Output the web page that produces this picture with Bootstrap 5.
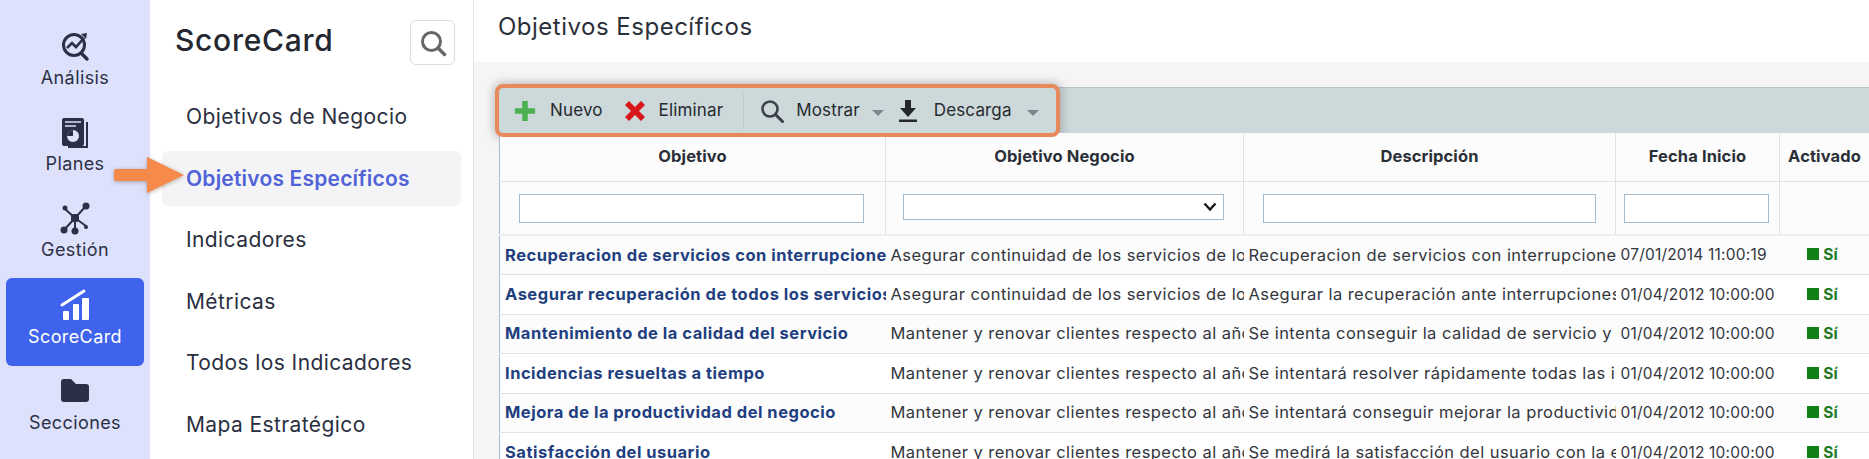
<!DOCTYPE html>
<html lang="es">
<head>
  <meta charset="UTF-8">
  <title>ScoreCard</title>
  <link href="https://cdn.jsdelivr.net/npm/bootstrap@5.3.3/dist/css/bootstrap.min.css" rel="stylesheet">
  <style>
    html, body { height: 459px; overflow: hidden; }
    body { font-family: Inter, "Open Sans", sans-serif; color: #2b2f3f; background: #fff; }
    .app-shell { height: 459px; }

    .rail { width: 150px; background: #dde1fb; padding-top: 21px; }
    .rail-item { width: 138px; height: 86px; margin: 0 6px; border-radius: 6px; color: #2b3046; font-size: 18px; letter-spacing: .4px; line-height: 24px; text-decoration: none; }
    .rail-item svg { width: 36px; height: 36px; margin-top: 7px; margin-bottom: 2px; }
    .rail-item.is-active { background: #3f63ec; color: #fff; height: 88px; margin-top: -1px; }
    .rail-item.is-active svg { margin-top: 9px; }

    .submenu { width: 324px; border-right: 1px solid #e4e4e4; padding: 0 12px; }
    .submenu-head { height: 81px; padding: 20px 6px 0 13px; }
    .submenu-title { font-size: 30px; font-weight: 500; letter-spacing: .7px; color: #24272f; margin: 0; line-height: 40px; }
    .search-box { width: 45px; height: 45px; border: 1px solid #dcdcdc; border-radius: 6px; background: #fff; padding: 0; }
    .side-links { margin: 8px 0 0; padding: 0; list-style: none; }
    .side-link { display: block; height: 55px; margin: 0 0 6.5px; padding: 0 24px; line-height: 55px; font-size: 21px; letter-spacing: .4px; color: #2b2f3f; border-radius: 6px; text-decoration: none; }
    .side-link.is-current { background: #f4f4f6; color: #4f63d7; font-weight: 600; letter-spacing: .2px; }

    .main-pane { background: #f5f5f5; min-width: 0; }
    .page-head { height: 62px; background: #fff; padding: 12px 24px 0; }
    .page-title { font-size: 24px; letter-spacing: .5px; line-height: 30px; font-weight: 400; color: #2b2f3a; margin: 0; }
    .grid-wrap { padding: 25px 0 0 25px; }
    .tool-strip { height: 46px; background: #ccd8da; border-top: 1px solid #b9c6c9; }
    .tool-set { width: 557px; height: 45px; outline: 4px solid #e8895c; border-radius: 4px; box-shadow: 0 0 8px 6px rgba(70, 70, 70, .3); padding-left: 15px; }
    .tool-btn { font-size: 17px; letter-spacing: .15px; color: #26292e; }
    .tool-sep { width: 1px; height: 36px; background: #c0ccd0; }
    .tool-caret { width: 0; height: 0; border-left: 6px solid transparent; border-right: 6px solid transparent; border-top: 6px solid #7b858b; margin-top: 4px; }
    .tool-nuevo { margin-left: 14px; }
    .tool-del { margin-left: 21px; }
    .tool-del-label { margin-left: 13px; }
    .tool-sep { margin-left: 20px; }
    .tool-find { margin-left: 16px; }
    .tool-find-label { margin-left: 12px; }
    .tool-find-caret { margin-left: 12px; }
    .tool-down { margin-left: 14px; }
    .tool-down-label { margin-left: 16px; }
    .tool-down-caret { margin-left: 15px; }

    .data-grid { table-layout: fixed; width: 1370px; margin: 0; border-collapse: collapse; background: #fff; border-left: 1px solid #a9bdd0; font-size: 16.5px; letter-spacing: .45px; }
    .data-grid th, .data-grid td { border-bottom: 1px solid #dde3e8; white-space: nowrap; overflow: hidden; vertical-align: middle; }
    .data-grid thead th { height: 48px; background: #fcfcfc; text-align: center; font-weight: 700; color: #2b3038; border-right: 1px solid #dfe3e6; padding: 0; font-size: 16.5px; letter-spacing: .1px; }
    .data-grid .filter-row td { height: 54px; background: #fcfcfc; border-right: 1px solid #dfe3e6; border-bottom: 2px solid #eee; vertical-align: top; padding: 12px 19px 0; }
    .data-grid .filter-row .filter-first { padding-right: 21px; }
    .data-grid .filter-row .filter-choice { padding-left: 17px; padding-right: 19px; }
    .data-grid .filter-row .filter-date { padding-left: 8px; padding-right: 10px; }
    .data-grid tbody td { height: 39.5px; padding: 0 2px 0 5px; color: #33363d; }
    .data-grid tbody tr:nth-child(even) td { background: #fcfcfc; }
    .data-grid tbody .cell-date { font-size: 15.5px; letter-spacing: .2px; padding-right: 0; }
    .data-grid tbody .cell-state { padding: 0 4px 0 0; font-size: 15.5px; letter-spacing: 0; }
    .grid-link { font-weight: 700; color: #1f3f80; letter-spacing: .5px; text-decoration: none; }
    .grid-input { display: block; width: 100%; height: 29px; border: 1px solid #a4bccd; background: #fff; padding: 0; border-radius: 0; }
    .grid-select { display: block; width: 100%; height: 26px; border: 1px solid #a4bccd; padding: 0; border-radius: 0; appearance: none; background: #fff url("data:image/svg+xml,%3csvg xmlns='http://www.w3.org/2000/svg' viewBox='0 0 14 10'%3e%3cpath d='M1.5 1.5L7 7.5l5.5-6' fill='none' stroke='%23111' stroke-width='2.2'/%3e%3c/svg%3e") no-repeat right 6px center / 14px 10px; }
    .status-dot { display: inline-block; width: 12px; height: 12px; background: #118018; margin-right: 4px; }
    .status-yes { font-weight: 700; color: #1f7a26; }

    .note-arrow { position: absolute; left: 112px; top: 153px; width: 76px; height: 44px; filter: drop-shadow(0 1px 2px rgba(90, 60, 40, .4)); }
  </style>
</head>
<body>
  <div class="app-shell d-flex position-relative">
    <nav class="rail flex-shrink-0">
      <a class="rail-item d-flex flex-column align-items-center" href="#">
        <svg viewBox="0 0 36 36"><circle cx="17" cy="17" r="10.5" fill="none" stroke="#2b3046" stroke-width="3"/><path d="M10 20l5-5 4 4 8-9" fill="none" stroke="#2b3046" stroke-width="2.6"/><path d="M24 6l6-1-1 6z" fill="#2b3046"/><path d="M24 25l6 6" stroke="#2b3046" stroke-width="3.4" stroke-linecap="round"/></svg>
        <span>Análisis</span>
      </a>
      <a class="rail-item d-flex flex-column align-items-center" href="#">
        <svg viewBox="0 0 36 36"><path d="M29 8h2v26H11v-2h18z" fill="#2b3046"/><rect x="5" y="4" width="22" height="28" rx="2" fill="#2b3046"/><path d="M8 8h16M8 12h11" stroke="#dde1fb" stroke-width="1.5"/><circle cx="16" cy="22" r="6" fill="#dde1fb"/><path d="M16 22v-6a6 6 0 0 0-6 6z" fill="#2b3046"/></svg>
        <span>Planes</span>
      </a>
      <a class="rail-item d-flex flex-column align-items-center" href="#">
        <svg viewBox="0 0 36 36"><path d="M18 18L7 8M18 18L29 6M18 18L7 30M18 18v12M18 18l11 8" stroke="#2b3046" stroke-width="2"/><rect x="14" y="14" width="8" height="8" rx="3" fill="#2b3046"/><circle cx="8" cy="8" r="2.5" fill="#2b3046"/><circle cx="29" cy="6" r="3.5" fill="#2b3046"/><circle cx="7" cy="30" r="3.5" fill="#2b3046"/><circle cx="18" cy="31" r="3.5" fill="#2b3046"/><circle cx="29" cy="27" r="2" fill="#2b3046"/></svg>
        <span>Gestión</span>
      </a>
      <a class="rail-item is-active d-flex flex-column align-items-center" href="#">
        <svg viewBox="0 0 36 36"><path d="M5 18L27 4" stroke="#fff" stroke-width="3" stroke-linecap="round"/><rect x="6" y="24" width="6" height="9" rx="1" fill="#fff"/><rect x="16" y="17" width="6" height="16" rx="1" fill="#fff"/><rect x="25" y="11" width="7" height="22" rx="1" fill="#fff"/></svg>
        <span>ScoreCard</span>
      </a>
      <a class="rail-item d-flex flex-column align-items-center" href="#">
        <svg viewBox="0 0 36 36"><path d="M4 9a3 3 0 0 1 3-3h7l5 5h10a3 3 0 0 1 3 3v12a3 3 0 0 1-3 3H7a3 3 0 0 1-3-3z" fill="#2b3046"/></svg>
        <span>Secciones</span>
      </a>
    </nav>

    <aside class="submenu flex-shrink-0">
      <div class="submenu-head d-flex justify-content-between align-items-start">
        <h1 class="submenu-title">ScoreCard</h1>
        <button class="search-box d-flex align-items-center justify-content-center" type="button">
          <svg width="28" height="28" viewBox="0 0 28 28"><circle cx="12.5" cy="12.5" r="9" fill="none" stroke="#666" stroke-width="3"/><path d="M19 19l6.5 6.5" stroke="#666" stroke-width="3.4" stroke-linecap="round"/></svg>
        </button>
      </div>
      <ul class="side-links">
        <li><a class="side-link" href="#">Objetivos de Negocio</a></li>
        <li><a class="side-link is-current" href="#">Objetivos Específicos</a></li>
        <li><a class="side-link" href="#">Indicadores</a></li>
        <li><a class="side-link" href="#">Métricas</a></li>
        <li><a class="side-link" href="#">Todos los Indicadores</a></li>
        <li><a class="side-link" href="#">Mapa Estratégico</a></li>
      </ul>
    </aside>

    <main class="main-pane flex-grow-1">
      <div class="page-head">
        <h2 class="page-title">Objetivos Específicos</h2>
      </div>
      <div class="grid-wrap">
        <div class="tool-strip">
          <div class="tool-set d-flex align-items-center">
            <svg width="22" height="22" viewBox="0 0 24 24"><path d="M9 1h6v8h8v6h-8v8H9v-8H1V9h8z" fill="#4caf50"/></svg>
            <span class="tool-btn tool-nuevo">Nuevo</span>
            <svg class="tool-del" width="22" height="22" viewBox="0 0 22 22"><path d="M1 5l4-4 6 6 6-6 4 4-6 6 6 6-4 4-6-6-6 6-4-4 6-6z" fill="#d81818"/></svg>
            <span class="tool-btn tool-del-label">Eliminar</span>
            <span class="tool-sep"></span>
            <svg class="tool-find" width="24" height="24" viewBox="0 0 24 24"><circle cx="10" cy="10" r="7.5" fill="none" stroke="#3b4149" stroke-width="2.6"/><path d="M15.5 15.5l7 7" stroke="#3b4149" stroke-width="3" stroke-linecap="round"/></svg>
            <span class="tool-btn tool-find-label">Mostrar</span>
            <span class="tool-caret tool-find-caret"></span>
            <svg class="tool-down" width="20" height="24" viewBox="0 0 20 24"><path d="M7 1h6v8h5l-8 9-8-9h5zM1 20.5h18V23H1z" fill="#23272c"/></svg>
            <span class="tool-btn tool-down-label">Descarga</span>
            <span class="tool-caret tool-down-caret"></span>
          </div>
        </div>
        <table class="data-grid">
          <colgroup>
            <col style="width: 386px"><col style="width: 358px"><col style="width: 372px"><col style="width: 164px"><col style="width: 90px">
          </colgroup>
          <thead>
            <tr><th>Objetivo</th><th>Objetivo Negocio</th><th>Descripción</th><th>Fecha Inicio</th><th>Activado</th></tr>
          </thead>
          <tbody id="gridBody">
            <tr class="filter-row">
              <td class="filter-first"><input class="grid-input" type="text" aria-label="Objetivo"></td>
              <td class="filter-choice"><select class="grid-select" aria-label="Objetivo Negocio"><option></option></select></td>
              <td><input class="grid-input" type="text" aria-label="Descripción"></td>
              <td class="filter-date"><input class="grid-input" type="text" aria-label="Fecha Inicio"></td>
              <td></td>
            </tr>
          </tbody>
        </table>
      </div>
    </main>

    <svg class="note-arrow" viewBox="0 0 76 44">
      <path d="M4 16h31V4l37 18-37 18V28H4a2 2 0 0 1-2-2v-8a2 2 0 0 1 2-2z" fill="#f58a4b"/>
    </svg>
  </div>

  <script>
    const cont = 'Asegurar continuidad de los servicios de los clientes';
    const renov = 'Mantener y renovar clientes respecto al año anterior';
    const rows = [
      ['Recuperacion de servicios con interrupciones', cont, 'Recuperacion de servicios con interrupciones graves', '07/01/2014 11:00:19'],
      ['Asegurar recuperación de todos los servicios', cont, 'Asegurar la recuperación ante interrupciones graves', '01/04/2012 10:00:00'],
      ['Mantenimiento de la calidad del servicio', renov, 'Se intenta conseguir la calidad de servicio y mantenerla', '01/04/2012 10:00:00'],
      ['Incidencias resueltas a tiempo', renov, 'Se intentará resolver rápidamente todas las incidencias', '01/04/2012 10:00:00'],
      ['Mejora de la productividad del negocio', renov, 'Se intentará conseguir mejorar la productividad del negocio', '01/04/2012 10:00:00'],
      ['Satisfacción del usuario', renov, 'Se medirá la satisfacción del usuario con la encuesta', '01/04/2012 10:00:00']
    ];
    const body = document.getElementById('gridBody');
    rows.forEach(r => {
      const tr = document.createElement('tr');
      tr.innerHTML = `<td><a class="grid-link" href="#">${r[0]}</a></td><td>${r[1]}</td><td>${r[2]}</td><td class="cell-date">${r[3]}</td>` +
        `<td class="cell-state text-center"><span class="status-dot"></span><span class="status-yes">Sí</span></td>`;
      body.appendChild(tr);
    });
  </script>
  <script src="https://cdn.jsdelivr.net/npm/bootstrap@5.3.3/dist/js/bootstrap.bundle.min.js"></script>
</body>
</html>
